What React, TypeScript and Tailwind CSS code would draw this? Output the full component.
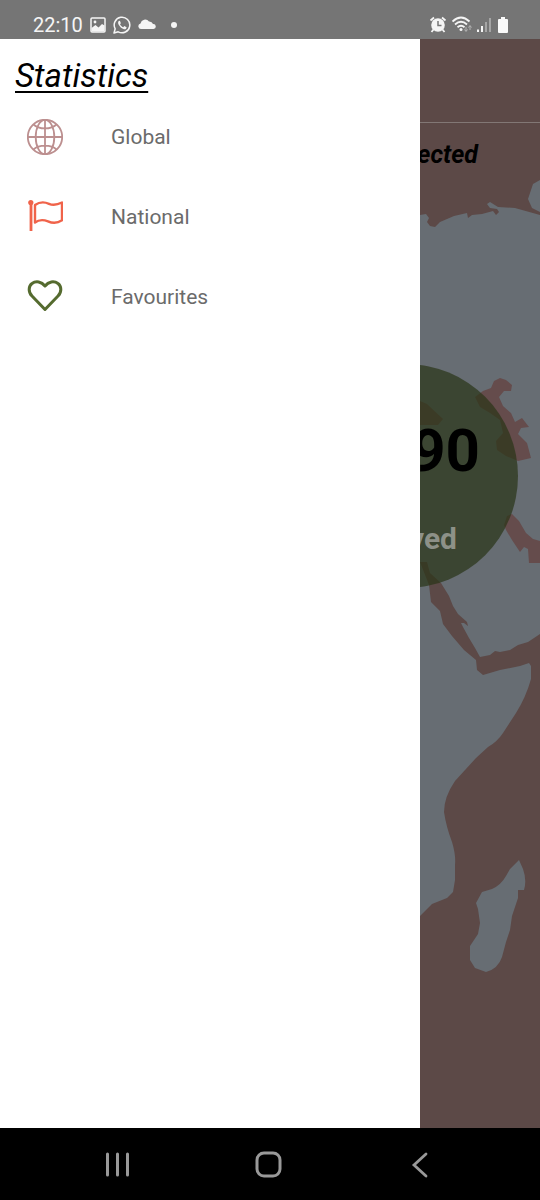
import React from "react";

function GlobeIcon() {
  return (
    <svg viewBox="0 0 36 36" className="size-9" fill="none" stroke="#bc8f8f" strokeWidth="1.8" aria-hidden="true">
      <circle cx="18" cy="18" r="17.2" />
      <ellipse cx="18" cy="18" rx="9.3" ry="17.2" />
      <path d="M18 1v34M1 18h34M6.5 5.5C12 10.700 24 10.700 29.500 5.500M6.500 30.500C12 25.300 24 25.300 29.500 30.500" />
    </svg>
  );
}

function FlagIcon() {
  return (
    <svg viewBox="0 0 36 36" className="size-9" fill="none" stroke="#f0634a" strokeWidth="2.400" aria-hidden="true">
      <path d="M4 2v30" strokeWidth="2.800" />
      <circle cx="3.800" cy="3.500" r="2.600" fill="#f0634a" stroke="none" />
      <path d="M8 6C13 2.500 17 2.500 22 4.800C27 7 31 5.500 35 3.500V21.300C30 24.500 26 24.500 21 22.300C16 20.500 12 20.500 8 23.500Z" strokeLinejoin="round" />
    </svg>
  );
}

function HeartIcon() {
  return (
    <svg viewBox="0 0 36 36" className="size-9" fill="none" stroke="#556b2f" strokeWidth="3" strokeLinejoin="round" aria-hidden="true">
      <path d="M18 30.500L5 17C1 13 1.500 7 5 4.500C9 1.500 14.500 2.500 18 7C21.500 2.500 27 1.500 31 4.500C34.500 7 35 13 31 17Z" />
    </svg>
  );
}

function PictureIcon() {
  return (
    <svg viewBox="0 0 16 16" className="size-4" aria-hidden="true">
      <rect x="1" y="1" width="14" height="14" rx="1" fill="none" stroke="#f5f5f5" strokeWidth="1.500" />
      <path d="M1.500 14.500V11L5.500 8L8.500 10.500L12 7L14.500 8.500V14.500Z" fill="#f5f5f5" />
      <circle cx="5" cy="5" r="1.400" fill="#f5f5f5" />
    </svg>
  );
}

function WhatsAppIcon() {
  return (
    <svg viewBox="0 0 18 18" className="size-[18px]" aria-hidden="true">
      <path d="M1 17L2.200 12.800A7.800 7.800 0 1 1 5.200 15.800Z" fill="none" stroke="#f5f5f5" strokeWidth="1.500" strokeLinejoin="round" />
      <path d="M6.300 4.800C5 5.300 4.700 7 5.700 8.700C7 11 8.800 12.600 11 13.200C12.600 13.500 13.500 12.500 13.600 11.200L11.300 10L10.200 11.200C8.800 10.600 7.700 9.500 7 8.200L7.900 7.200L7 4.900Z" fill="#f5f5f5" />
    </svg>
  );
}

function CloudIcon() {
  return (
    <svg viewBox="0 0 18 12" className="h-3 w-[18px]" aria-hidden="true">
      <path d="M3.500 10A2.800 2.800 0 0 1 2.500 4.500A4.800 4.800 0 0 1 11 2.500A4 4 0 0 1 15 5A2.500 2.500 0 0 1 15.500 10Z" fill="#f5f5f5" />
    </svg>
  );
}

function AlarmIcon() {
  return (
    <svg viewBox="0 0 18 18" className="size-[18px]" aria-hidden="true">
      <circle cx="9" cy="9" r="6.800" fill="#f5f5f5" />
      <path d="M1.500 4.500L5 1.500M16.500 4.500L13 1.500M4.500 13.500L2.500 16M13.500 13.500L15.500 16" stroke="#f5f5f5" strokeWidth="1.800" />
      <path d="M9 5V9.500H12.500" fill="none" stroke="#777" strokeWidth="1.500" />
    </svg>
  );
}

function WifiIcon() {
  return (
    <svg viewBox="0 0 20 18" className="h-[18px] w-5" fill="none" aria-hidden="true">
      <path d="M0.500 5.500Q9 -2.500 17.500 5.500M3 8.500Q9 3 15 8.500M5.500 11.200Q9 8.200 12.500 11.200" stroke="#f5f5f5" strokeWidth="1.800" />
      <circle cx="9" cy="13.500" r="1.500" fill="#f5f5f5" />
      <path d="M14 11v4M12.500 13.500L14 15.500L15.500 13.500M18 14v-4M16.500 11.500L18 9.500L19.500 11.500" stroke="#b4b4b4" strokeWidth="1" />
    </svg>
  );
}

function SignalIcon() {
  return (
    <svg viewBox="0 0 16 16" className="size-4" aria-hidden="true">
      <path d="M0 12.500h2V15H0ZM4 9h2V15H4Z" fill="#f5f5f5" />
      <path d="M8 5h2V15H8ZM12 1h2V15H12Z" fill="#a5a5a5" />
    </svg>
  );
}

function BatteryIcon() {
  return (
    <svg viewBox="0 0 10 16" className="h-4 w-2.5" aria-hidden="true">
      <path d="M3 0H7V2H9Q10 2 10 3V15Q10 16 9 16H1Q0 16 0 15V3Q0 2 1 2H3Z" fill="#fafafa" />
    </svg>
  );
}

function WorldMap() {
  return (
    <svg viewBox="420 39 120 1089" preserveAspectRatio="xMinYMin slice" className="absolute inset-0 size-full" aria-hidden="true">
      <rect x="420" y="39" width="400" height="1089" fill="#5c4947" />
      <path
        fill="#676d73"
        d="M420 215L426 214L429 218L427 222L430 226L435 227L440 222L454 216L467 213L468 218L472 215L482 214L493 211L496 215L499 212L497 209L490 208L487 204L490 202L498 207L515 208L540 215V634L528 642L518 645L510 650L500 652L495 651L490 655L480 657L475 648L469 638L463 627L461 623L464 623L468 626L467 622L458 614L453 606L449 596L441 583L430 573L427 562H420V562L429 585L431 602L440 611L443 624L452 636L464 650L476 660L477 670L483 675L500 670L520 666L529 663L531 666V679Q526 697 516 713L503 733Q497 742 488 747L476 758L455 781Q444 797 444 812Q446 826 452 842Q456 855 455 865V880L453 892L447 898L432 904L420 916Z"
      />
      <path fill="#676d73" d="M540 180L533 184L530 193L528 199L532 208L540 212Z" />
      <path
        fill="#676d73"
        d="M519 860L523 869Q527 880 524 890L518 890V898L512 916L510 930L506 942L502 957Q498 969 486 972L475 968L470 960V946L478 934L480 923L478 909L476 903L482 892L492 889Q501 885 506 876L510 869Z"
      />
      <path
        fill="#654c4c"
        d="M475 397L483 391L491 388L494 381L500 378L506 380L512 385L511 391L504 391L499 397L503 406L511 413L515 422L522 418L529 427L521 428L518 434L527 443L531 458L518 461L506 456L497 450L496 441L503 433L500 420L490 413L480 407Z"
      />
      <path fill="#654c4c" d="M420 401L427 404L443 419L438 425H420Z" />
      <path fill="#654c4c" d="M507 516L512 514L519 521L526 533L533 539L540 541V563L529 563L528 549L524 547L520 552L512 540L506 530L504 525Z" />
      <circle cx="406" cy="476" r="112" fill="#2a3517" fillOpacity="0.7" />
    </svg>
  );
}

const sections = [
  { label: "Global", Icon: GlobeIcon },
  { label: "National", Icon: FlagIcon },
  { label: "Favourites", Icon: HeartIcon },
];

function StatusBar() {
  return (
    <header className="flex h-[39px] items-end justify-between bg-[#757575] pr-8 pl-[33px] text-[#f5f5f5]">
      <div className="flex h-7 items-center">
        <time className="w-[57px] text-xl leading-7">22:10</time>
        <div className="flex items-center gap-[7px]">
          <PictureIcon />
          <WhatsAppIcon />
          <CloudIcon />
          <span className="ml-2 size-1.5 rounded-full bg-[#f5f5f5]" />
        </div>
      </div>
      <div className="flex h-7 items-center gap-[5px]">
        <AlarmIcon />
        <WifiIcon />
        <SignalIcon />
        <BatteryIcon />
      </div>
    </header>
  );
}

function Drawer() {
  return (
    <aside className="w-7/9 shrink-0 bg-white pt-[17px]">
      <h1 className="pl-[15px] text-[33px] leading-10 text-black italic underline decoration-2 underline-offset-4">Statistics</h1>
      <nav aria-label="Statistics" className="flex flex-col">
        {sections.map(({ label, Icon }) => (
          <a key={label} href={`#${label.toLowerCase()}`} className="flex h-20 items-start gap-12 pt-[23px] pl-[27px] text-[21px] leading-9 text-[#6b6b6b]">
            <Icon />
            {label}
          </a>
        ))}
      </nav>
    </aside>
  );
}

function Summary() {
  return (
    <section className="relative flex-1 overflow-hidden">
      <WorldMap />
      <div className="relative flex flex-col">
        <div className="h-[84px] border-b border-[#827775]" />
        <h2 className="flex h-16 justify-end pt-4 pr-[62px] text-[25px] leading-8 font-bold text-black italic">fected</h2>
        <div className="flex justify-end pt-[228px] pr-[60px] text-[60px] leading-[72px] font-bold text-black">90</div>
        <div className="flex justify-end pt-8 pr-[83px] text-[30px] leading-10 font-bold text-[#8d9188]">ved</div>
      </div>
    </section>
  );
}

function NavigationBar() {
  return (
    <footer className="flex h-[72px] items-center justify-between bg-black px-[102px] pt-0.5 text-[#999]">
      <button type="button" aria-label="Recent apps">
        <svg viewBox="0 0 30 30" className="size-[30px]" stroke="currentColor" strokeWidth="3" strokeLinecap="round">
          <path d="M5.500 4V25M15.500 4V25M25.500 4V25" />
        </svg>
      </button>
      <button type="button" aria-label="Home">
        <svg viewBox="0 0 30 30" className="size-[30px]" fill="none" stroke="currentColor" strokeWidth="3">
          <rect x="2" y="3" width="23" height="23" rx="7" />
        </svg>
      </button>
      <button type="button" aria-label="Back">
        <svg viewBox="0 0 30 30" className="size-[30px]" fill="none" stroke="currentColor" strokeWidth="2.800" strokeLinecap="round">
          <path d="M18 4L6 15L18 26" />
        </svg>
      </button>
    </footer>
  );
}

export default function App() {
  return (
    <div className="flex min-h-screen flex-col bg-black font-[Roboto,sans-serif]">
      <StatusBar />
      <main className="flex flex-1">
        <Drawer />
        <Summary />
      </main>
      <NavigationBar />
    </div>
  );
}
